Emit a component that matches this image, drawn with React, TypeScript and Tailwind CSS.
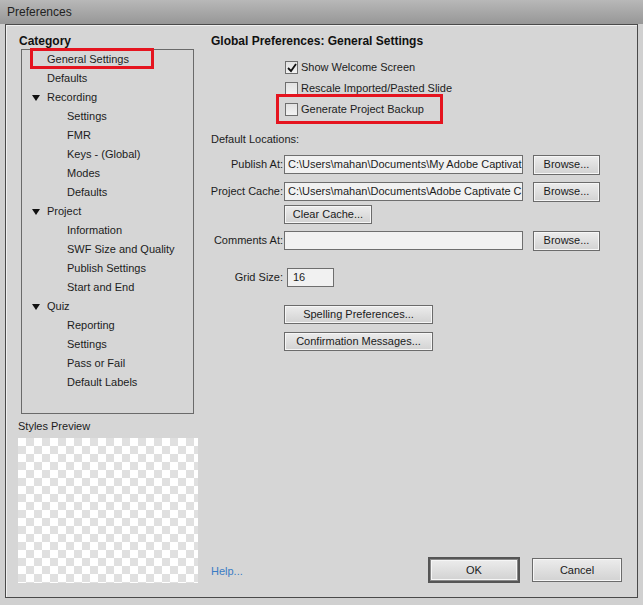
import type { ReactNode } from 'react';

const TREE = [
  { label: 'General Settings', level: 0 },
  { label: 'Defaults', level: 0 },
  { label: 'Recording', level: 0, open: true },
  { label: 'Settings', level: 1 },
  { label: 'FMR', level: 1 },
  { label: 'Keys - (Global)', level: 1 },
  { label: 'Modes', level: 1 },
  { label: 'Defaults', level: 1 },
  { label: 'Project', level: 0, open: true },
  { label: 'Information', level: 1 },
  { label: 'SWF Size and Quality', level: 1 },
  { label: 'Publish Settings', level: 1 },
  { label: 'Start and End', level: 1 },
  { label: 'Quiz', level: 0, open: true },
  { label: 'Reporting', level: 1 },
  { label: 'Settings', level: 1 },
  { label: 'Pass or Fail', level: 1 },
  { label: 'Default Labels', level: 1 },
];

function Btn({ children, className = '' }: { children: ReactNode; className?: string }) {
  return (
    <div
      className={`flex items-center justify-center border border-[#6b6b6b] bg-gradient-to-b from-[#ececec] to-[#d2d2d2] shadow-[inset_0_0_0_1px_#f6f6f6] text-[#1a1a1a] ${className}`}
    >
      {children}
    </div>
  );
}

function Check({ checked, label }: { checked?: boolean; label: string }) {
  return (
    <div className="flex items-center h-[21px] pl-[74px]">
      <div className="relative w-[13px] h-[13px] border border-[#6e6e6e] bg-gradient-to-b from-[#e2e2e2] to-[#f2f2f2]">
        {checked && (
          <svg className="absolute left-[1px] top-[1px]" width="10" height="10" viewBox="0 0 10 10">
            <path d="M1 5 L4 8 L9 1" fill="none" stroke="#111" strokeWidth="1.8" />
          </svg>
        )}
      </div>
      <span className="ml-[3px]">{label}</span>
    </div>
  );
}

function Field({ label, value }: { label: string; value: string }) {
  return (
    <div className="flex items-center h-[19px]">
      <div className="w-[73px] flex justify-end pr-[1px]">
        <span className="whitespace-nowrap">{label}</span>
      </div>
      <div className="w-[239px] h-[19px] border border-[#6e6e6e] bg-[#f1f1f1] pl-[3px] overflow-hidden whitespace-nowrap leading-[17px]">
        {value}
      </div>
      <Btn className="ml-[10px] w-[67px] h-[20px]">Browse...</Btn>
    </div>
  );
}

export default function App() {
  return (
    <div
      className="w-[643px] h-[605px] flex flex-col bg-[#d0d0d0] text-[11px] text-[#1c1c1c] overflow-hidden"
      style={{ fontFamily: '"Liberation Sans", Arial, sans-serif' }}
    >
      {/* Title bar */}
      <div className="h-[24px] shrink-0 flex items-center pl-[7px] text-[12px] text-[#222] bg-gradient-to-b from-[#b8b8b8] to-[#979797]">
        Preferences
      </div>

      <div className="flex-1 flex mx-[5px] mb-[7px] border border-[#4a4a4a] bg-[#d6d6d6] shadow-[inset_1px_1px_0_#f0f0f0]">
        {/* Left column */}
        <div className="w-[205px] shrink-0 pl-[12px] flex flex-col">
          <div className="mt-[9px] pl-[1px] h-[15px] leading-[15px] font-bold text-[12px] text-[#111]">Category</div>
          <div className="relative ml-[3px] w-[173px] h-[365px] border border-[#6a6a6a]">
            {TREE.map((it, i) => (
              <div key={i} className="h-[19px] flex items-center">
                <div className="w-[25px] flex justify-center pl-[2px]">
                  {it.open && (
                    <svg width="8" height="6" viewBox="0 0 8 6">
                      <path d="M0 0 H8 L4 6 Z" fill="#111" />
                    </svg>
                  )}
                </div>
                <span className={it.level ? 'pl-[20px]' : ''}>{it.label}</span>
              </div>
            ))}
            <div className="absolute left-[8px] top-[-2px] w-[124px] h-[21px] border-[3px] border-[#e5141f]" />
          </div>
          <div className="mt-[5px] h-[15px] leading-[15px]">Styles Preview</div>
          <div className="mt-[4px] w-[180px] h-[145px] bg-[repeating-conic-gradient(#e0e0e0_0_25%,#ffffff_0_50%)] bg-[length:16px_16px] bg-[position:0_0]" />
        </div>

        {/* Right column */}
        <div className="flex-1 flex flex-col pr-[15px]">
          <div className="mt-[9px] h-[15px] leading-[15px] font-bold text-[12px] text-[#111]">
            Global Preferences: General Settings
          </div>
          <div className="relative mt-[8px]">
            <Check checked label="Show Welcome Screen" />
            <Check label="Rescale Imported/Pasted Slide" />
            <Check label="Generate Project Backup" />
            <div className="absolute left-[65px] top-[37px] w-[167px] h-[30px] border-[3px] border-[#e5141f]" />
          </div>
          <div className="mt-[12px] h-[15px] leading-[15px]">Default Locations:</div>
          <div className="mt-[8px]">
            <Field label="Publish At:" value="C:\Users\mahan\Documents\My Adobe Captivat" />
          </div>
          <div className="mt-[8px]">
            <Field label="Project Cache:" value="C:\Users\mahan\Documents\Adobe Captivate C" />
          </div>
          <Btn className="mt-[4px] ml-[73px] w-[88px] h-[19px]">Clear Cache...</Btn>
          <div className="mt-[7px]">
            <Field label="Comments At:" value="" />
          </div>
          <div className="mt-[18px] flex items-center h-[19px]">
            <span className="w-[72px] text-right">Grid Size:</span>
            <div className="ml-[4px] w-[47px] h-[19px] border border-[#6e6e6e] bg-[#f1f1f1] pl-[5px] leading-[17px]">16</div>
          </div>
          <Btn className="mt-[18px] ml-[73px] w-[149px] h-[19px]">Spelling Preferences...</Btn>
          <Btn className="mt-[8px] ml-[73px] w-[149px] h-[19px]">Confirmation Messages...</Btn>

          <div className="mt-auto mb-[14px] flex items-center">
            <span className="text-[#3a7cc4] mt-[3px]">Help...</span>
            <div className="ml-auto flex items-center">
              <div className="border-2 border-[#555]">
                <Btn className="w-[88px] h-[22px] border-[#8a8a8a]">OK</Btn>
              </div>
              <Btn className="ml-[12px] w-[90px] h-[24px]">Cancel</Btn>
            </div>
          </div>
        </div>
      </div>
    </div>
  );
}
